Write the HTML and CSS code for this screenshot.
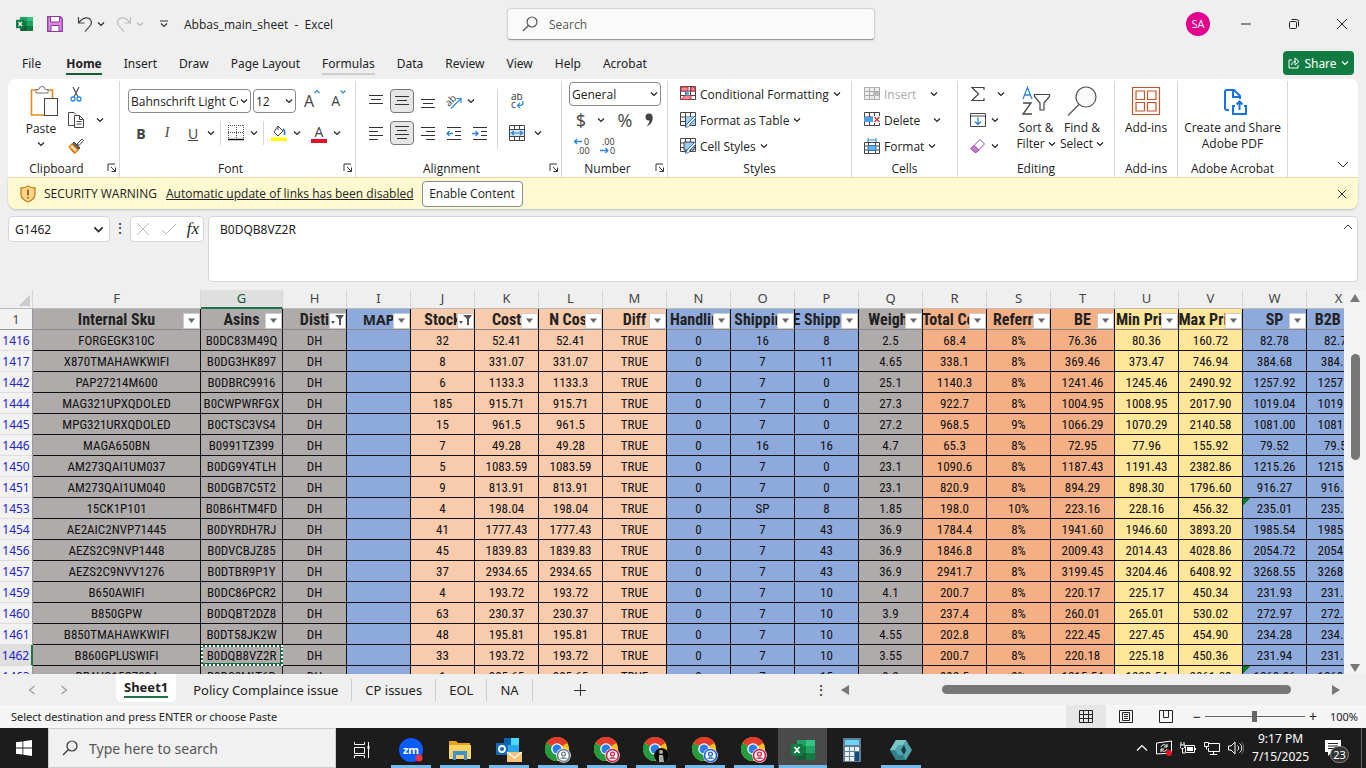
FILE: index.html
```html
<!DOCTYPE html>
<html lang="en">
<head>
    <meta charset="UTF-8">
    <meta name="viewport" content="width=device-width, initial-scale=1.0">
    <title>Abbas_main_sheet - Excel</title>
    <link rel="stylesheet" href="styles.css">
</head>
<body>
    <svg class="symbols">
        <symbol id="chev" viewBox="0 0 8 8"><path d="M1 2.500l3 3 3-3" fill="none" stroke="currentColor" stroke-width="1.200"/></symbol>
        <symbol id="launch" viewBox="0 0 10 10"><path d="M1 8V1h7M4 4l4 4M8.500 4.500v4h-4" fill="none" stroke="#333"/></symbol>
        <symbol id="lens" viewBox="0 0 18 18"><circle cx="11" cy="7" r="5" fill="none" stroke="currentColor" stroke-width="1.200"/><path d="M7.500 10.500L2 16" stroke="currentColor" stroke-width="1.200"/></symbol>
        <symbol id="excel" viewBox="0 0 24 22">
            <path d="M6 1h17a1 1 0 0 1 1 1v18a1 1 0 0 1-1 1H6z" fill="#185c37"/>
            <path d="M6 1h9v6H6z" fill="#21a366"/><path d="M15 1h8a1 1 0 0 1 1 1v5h-9z" fill="#33c481"/>
            <path d="M6 7h9v7H6z" fill="#107c41"/><path d="M15 7h9v7h-9z" fill="#21a366"/><path d="M15 14h9v6a1 1 0 0 1-1 1h-8z" fill="#107c41"/>
            <rect y="5" width="12" height="12" rx="1" fill="#107c41"/>
            <path d="M3.500 8l5 6M8.500 8l-5 6" stroke="#fff" stroke-width="1.700"/>
        </symbol>
        <symbol id="chrome" viewBox="0 0 26 26">
            <circle cx="12" cy="12" r="12" fill="#fbc116"/>
            <path d="M12 12L1.600 6A12 12 0 0 1 22.400 6z" fill="#e33b2e"/>
            <path d="M12 0a12 12 0 0 1 10.400 6H12z" fill="#e33b2e"/>
            <path d="M1.600 6A12 12 0 0 0 12 24l5.200-9L12 12z" fill="#249a41"/>
            <circle cx="12" cy="12" r="5.800" fill="#fff"/><circle cx="12" cy="12" r="4.500" fill="#2b7de9"/>
            <circle cx="18.500" cy="18.500" r="7.300" fill="#fff"/>
            <circle cx="18.500" cy="18.500" r="6" fill="none" stroke="currentColor" stroke-width="1.600"/>
            <circle cx="18.500" cy="17" r="1.900" fill="none" stroke="currentColor" stroke-width="1.300"/>
            <path d="M15 21.800c.5-2 6.500-2 7 0z" fill="currentColor"/>
        </symbol>
        <symbol id="grid16" viewBox="0 0 16 16"><path d="M.5.5h15v13H.5zM.5 5h15M.5 9.500h15M5.500.5v13M10.500.5v13" fill="#fff" stroke="#444"/></symbol>
    </svg>

    <header class="titlebar">
        <div class="quick">
            <svg class="i17"><use href="#excel"/></svg>
            <button aria-label="Save"><svg class="i16" viewBox="0 0 16 16"><path d="M.7.7h12.600l2 2v12.600H.7z" fill="#d98be0" stroke="#8f3a9b" stroke-width="1.300"/><path d="M3.500 1v5h9V1M4 15V9.500h8V15" fill="#fff" stroke="#8f3a9b"/></svg></button>
            <button aria-label="Undo"><svg class="i16" viewBox="0 0 16 16"><path d="M1.500 1v6h6M2 6.500C6 1 12 .5 14 4.500c1.500 3-.5 5-6 11" fill="none" stroke="#444" stroke-width="1.200"/></svg></button>
            <svg class="i8"><use href="#chev"/></svg>
            <button aria-label="Redo" class="dim"><svg class="i16" viewBox="0 0 16 16"><path d="M14.500 1v6h-6M14 6.500C10 1 4 .5 2 4.500c-1.500 3 .5 5 6 11" fill="none" stroke="#bbb" stroke-width="1.200"/></svg></button>
            <svg class="i8 dim"><use href="#chev"/></svg>
            <svg class="i8 custom" viewBox="0 0 8 8"><path d="M0 1h8M1 3.500l3 3 3-3" fill="none" stroke="#333" stroke-width="1.200"/></svg>
            <span>Abbas_main_sheet&nbsp; -&nbsp; Excel</span>
        </div>
        <label class="search"><svg class="i18"><use href="#lens"/></svg><input type="text" placeholder="Search" aria-label="Search"></label>
        <div class="window">
            <span class="avatar">SA</span>
            <button aria-label="Minimize"><svg class="i12" viewBox="0 0 12 12"><path d="M1 6h10" stroke="#222"/></svg></button>
            <button aria-label="Restore"><svg class="i12" viewBox="0 0 12 12"><rect x="1.500" y="3.500" width="7" height="7" rx="1" fill="none" stroke="#222"/><path d="M3.500 1.500h5a2 2 0 0 1 2 2v5" fill="none" stroke="#222"/></svg></button>
            <button aria-label="Close"><svg class="i12" viewBox="0 0 12 12"><path d="M1 1l10 10M11 1L1 11" stroke="#222"/></svg></button>
        </div>
    </header>

    <nav class="tabs">
        <button class="file">File</button>
        <button class="active">Home</button>
        <button>Insert</button>
        <button>Draw</button>
        <button>Page Layout</button>
        <button class="hover">Formulas</button>
        <button>Data</button>
        <button>Review</button>
        <button>View</button>
        <button>Help</button>
        <button>Acrobat</button>
        <button class="share"><svg class="i12" viewBox="0 0 12 12"><path d="M4 3H1v8h9V8M3.500 8C4 5 6 4.500 8 4.500M7 1l4 3.500L7 8V1z" fill="none" stroke="#fff"/></svg>Share<svg class="i8"><use href="#chev"/></svg></button>
    </nav>

    <section class="ribbon">
        <div class="group clipboard">
            <div class="body">
                <button class="big"><svg class="paste-icon" viewBox="0 0 28 31"><path d="M6 4H1.500v25H14M18 4h4.500v8" fill="none" stroke="#e88a1c" stroke-width="1.600"/><path d="M6 7V3.500h3a3 3 0 0 1 6 0h3V7z" fill="#fff" stroke="#777"/><rect x="14.500" y="12.500" width="13" height="17" fill="#fafafa" stroke="#444"/></svg>Paste<svg class="i8"><use href="#chev"/></svg></button>
                <div class="stack">
                    <div><button aria-label="Cut"><svg class="i16" viewBox="0 0 16 16"><path d="M5 1l5 10M11 1L6 11" stroke="#555" stroke-width="1.200"/><circle cx="5" cy="13" r="2" fill="none" stroke="#2b88d8" stroke-width="1.300"/><circle cx="11" cy="13" r="2" fill="none" stroke="#2b88d8" stroke-width="1.300"/></svg></button></div>
                    <div><button aria-label="Copy"><svg class="i16" viewBox="0 0 16 16"><path d="M6 13.500H.5V.5H6l2 2M6.500 3.500h5l4 4v8h-9zM11.500 3.500v4h4M8.500 9.500h5M8.500 12h5" fill="none" stroke="#444"/></svg></button><svg class="i8 push"><use href="#chev"/></svg></div>
                    <div><button aria-label="Format Painter"><svg class="i16" viewBox="0 0 16 16"><path d="M9 6l5-5 1.500 1.500-4.500 5z" fill="#fff" stroke="#444"/><path d="M6 4l6 6-1.500 1.500-6-6z" fill="#666" stroke="#444"/><path d="M4 6l6 6-3 3L1 9z" fill="#ffe0b5" stroke="#e07b10" stroke-width="1.300"/><path d="M3 11l4 4" stroke="#e07b10" stroke-width="2"/></svg></button></div>
                </div>
            </div>
            <footer class="more">Clipboard<svg class="i10"><use href="#launch"/></svg></footer>
        </div>

        <div class="group font">
            <div class="body rows">
                <div>
                    <select class="face" aria-label="Font"><option>Bahnschrift Light Condensed</option></select>
                    <select class="size" aria-label="Font size"><option>12</option></select>
                    <button class="grow">A<svg class="i6" viewBox="0 0 6 6"><path d="M.5 4L3 1.500 5.500 4" fill="none" stroke="#2b88d8" stroke-width="1.200"/></svg></button>
                    <button class="shrink">A<svg class="i6" viewBox="0 0 6 6"><path d="M.5 1.500L3 4l2.500-2.500" fill="none" stroke="#2b88d8" stroke-width="1.200"/></svg></button>
                </div>
                <div class="marks">
                    <button><b>B</b></button>
                    <button><i class="serif">I</i></button>
                    <button><u>U</u></button>
                    <svg class="i8"><use href="#chev"/></svg>
                    <hr>
                    <button aria-label="Borders"><svg class="i16" viewBox="0 0 16 16"><path d="M.5 0v14M15.500 0v14M0 .5h16M8.500 0v14M0 7.500h16" fill="none" stroke="#555" stroke-dasharray="1 1"/><path d="M0 14.500h16" stroke="#111" stroke-width="1.500"/></svg></button>
                    <svg class="i8"><use href="#chev"/></svg>
                    <hr>
                    <button aria-label="Fill Color"><svg class="i16" viewBox="0 0 16 16"><path d="M7 1l5 5-5 5-4-4zM7 1v4" fill="#fff" stroke="#444"/><path d="M12 4c2 1 2 3 1.500 6" fill="none" stroke="#1f6fc0" stroke-width="1.500"/><path d="M0 12.500h16V16H0z" fill="#ffff00"/></svg></button>
                    <svg class="i8"><use href="#chev"/></svg>
                    <button class="fontcolor"><span>A</span></button>
                    <svg class="i8"><use href="#chev"/></svg>
                </div>
            </div>
            <footer class="more">Font<svg class="i10"><use href="#launch"/></svg></footer>
        </div>

        <div class="group align">
            <div class="body">
                <div class="lines">
                    <button aria-label="Top Align"><svg class="i16" viewBox="0 0 16 16"><path d="M1 2.500h14M3 6.500h10M1 10.500h14" stroke="#333"/></svg></button>
                    <button aria-label="Middle Align" class="on"><svg class="i16" viewBox="0 0 16 16"><path d="M1 3.500h14M3 7.500h10M1 11.500h14" stroke="#333"/></svg></button>
                    <button aria-label="Bottom Align"><svg class="i16" viewBox="0 0 16 16"><path d="M1 6.500h14M3 10.500h10M1 14.500h14" stroke="#333"/></svg></button>
                    <button aria-label="Orientation"><svg class="i16" viewBox="0 0 16 16"><text x="0" y="11" font-size="10" fill="#444" transform="rotate(-45 5 9)">ab</text><path d="M5 15.500L15 5.500M10.500 5.500H15V10" fill="none" stroke="#2b88d8" stroke-width="1.200"/></svg></button>
                    <svg class="i8"><use href="#chev"/></svg>
                    <button aria-label="Align Left"><svg class="i16" viewBox="0 0 16 16"><path d="M1 2.500h14M1 6.500h9M1 10.500h14M1 14.500h9" stroke="#333"/></svg></button>
                    <button aria-label="Center" class="on"><svg class="i16" viewBox="0 0 16 16"><path d="M1 1.500h14M3 5.500h10M1 9.500h14M3 13.500h10" stroke="#333"/></svg></button>
                    <button aria-label="Align Right"><svg class="i16" viewBox="0 0 16 16"><path d="M1 2.500h14M6 6.500h9M1 10.500h14M6 14.500h9" stroke="#333"/></svg></button>
                    <button aria-label="Decrease Indent"><svg class="i16" viewBox="0 0 16 16"><path d="M1 2.500h14M9 6.500h6M9 10.500h6M1 14.500h14" stroke="#333"/><path d="M7 8.500H1M3.500 6L1 8.500 3.500 11" fill="none" stroke="#2b88d8" stroke-width="1.300"/></svg></button>
                    <button aria-label="Increase Indent"><svg class="i16" viewBox="0 0 16 16"><path d="M1 2.500h14M9 6.500h6M9 10.500h6M1 14.500h14" stroke="#333"/><path d="M0 8.500h6M3.500 6L6 8.500 3.500 11" fill="none" stroke="#2b88d8" stroke-width="1.300"/></svg></button>
                </div>
                <hr>
                <div class="wrap">
                    <button aria-label="Wrap Text"><svg class="i16" viewBox="0 0 16 16"><text x="2" y="7" font-size="10" fill="#333">ab</text><text x="2" y="15" font-size="10" fill="#333">c</text><path d="M13.500 8c2 4-1 4.500-5 4.500M11 10l-2.500 2.500L11 15" fill="none" stroke="#2b88d8" stroke-width="1.200"/></svg></button>
                    <span></span>
                    <button aria-label="Merge"><svg class="i16" viewBox="0 0 16 16"><path d="M.5.5h15v15H.5zM.5 4.500h15M.5 11.500h15M5.500.5v4M10.500.5v4M5.500 11.500v4M10.500 11.500v4" fill="#fff" stroke="#444"/><path d="M1 5h14v6H1z" fill="#cfe6fa"/><path d="M2.500 8h11M5 6L2.500 8 5 10M11 6l2.500 2L11 10" fill="none" stroke="#2b78c8" stroke-width="1.200"/></svg></button>
                    <svg class="i8"><use href="#chev"/></svg>
                </div>
            </div>
            <footer class="more">Alignment<svg class="i10"><use href="#launch"/></svg></footer>
        </div>

        <div class="group number">
            <div class="body stack">
                <div><select class="format" aria-label="Number Format"><option>General</option></select></div>
                <div class="signs"><button>$</button><svg class="i8"><use href="#chev"/></svg><button>%</button><button aria-label="Comma Style"><svg class="i16" viewBox="0 0 16 16"><circle cx="8" cy="5" r="3.500" fill="#444"/><path d="M11.500 5c.5 5-2 8-6 9.500 2-2.500 3-4 3-7z" fill="#444"/></svg></button></div>
                <div class="decimals">
                    <button aria-label="Increase Decimal"><svg class="i18" viewBox="0 0 18 18"><text x="11" y="8" font-size="9" fill="#333">0</text><text x="4" y="17" font-size="9" fill="#333">.00</text><path d="M9 4.500H1.500M4 2L1.500 4.500 4 7" fill="none" stroke="#2b88d8" stroke-width="1.300"/></svg></button>
                    <button aria-label="Decrease Decimal"><svg class="i18" viewBox="0 0 18 18"><text x="3" y="8" font-size="9" fill="#333">.00</text><text x="11" y="17" font-size="9" fill="#333">0</text><path d="M1 13.500h8M6.500 11L9 13.500 6.500 16" fill="none" stroke="#2b88d8" stroke-width="1.300"/></svg></button>
                </div>
            </div>
            <footer class="more">Number<svg class="i10"><use href="#launch"/></svg></footer>
        </div>

        <div class="group styles">
            <div class="body stack">
                <button><svg class="i16" viewBox="0 0 16 16"><use href="#grid16"/><path d="M1 1h7v4H1zM5 9.500h6v4H1zM11 1h4v4h-4z" fill="#f28a90" stroke="#c4313c"/><path d="M5.500 5.500H9v4H5.500z" fill="#5aa7e8"/></svg>Conditional Formatting<svg class="i8"><use href="#chev"/></svg></button>
                <button><svg class="i16" viewBox="0 0 16 16"><use href="#grid16"/><path d="M6 5h9v8H6z" fill="#9ccbf2"/><path d="M15 4l-7 7-3 4c3 .5 5-1 5-3l6-6z" fill="#fff" stroke="#2b6fb0"/></svg>Format as Table<svg class="i8"><use href="#chev"/></svg></button>
                <button><svg class="i16" viewBox="0 0 16 16"><use href="#grid16"/><path d="M4 4h10v8H4z" fill="#9ccbf2" stroke="#444"/><path d="M15 4l-7 7-3 4c3 .5 5-1 5-3l6-6z" fill="#fff" stroke="#2b6fb0"/></svg>Cell Styles<svg class="i8"><use href="#chev"/></svg></button>
            </div>
            <footer>Styles</footer>
        </div>

        <div class="group cells">
            <div class="body stack">
                <div class="insert"><button disabled><svg class="i16" viewBox="0 0 16 16"><path d="M.5 1.500h15v12H.5zM.5 5.500h15M.5 9.500h15M5.500 1.500v12M10.500 1.500v12" fill="#eee" stroke="#aaa"/><path d="M9 6h6v4H9z" fill="#bbb"/></svg>Insert</button><svg class="i8"><use href="#chev"/></svg></div>
                <div><button><svg class="i16" viewBox="0 0 16 16"><use href="#grid16"/><path d="M0 5h9v5H0z" fill="#4f9fe6"/><path d="M9 4h7v7H9z" fill="#fff"/><path d="M10.500 5l5 5M15.500 5l-5 5" stroke="#d13438" stroke-width="1.300"/></svg>Delete</button><svg class="i8"><use href="#chev"/></svg></div>
                <div class="format-row"><button><svg class="i16" viewBox="0 0 16 16"><path d="M.5 4.500h15v11H.5zM.5 8h15M.5 12h15M4.500 4.500v11M11.500 4.500v11" fill="#fff" stroke="#444"/><path d="M4 7.500h8v5H4z" fill="#6cb2ee" stroke="#2b6fb0"/><path d="M4 2h8M4 0v4M12 0v4" stroke="#2b88d8"/></svg>Format<svg class="i8"><use href="#chev"/></svg></button></div>
            </div>
            <footer>Cells</footer>
        </div>

        <div class="group editing">
            <div class="body">
                <div class="stack">
                    <div class="sum"><button aria-label="AutoSum"><svg class="i16" viewBox="0 0 16 16"><path d="M14 4V1.500H2L8.500 8 2 14.500h12V12" fill="none" stroke="#444" stroke-width="1.200"/></svg></button><svg class="i8"><use href="#chev"/></svg></div>
                    <div><button aria-label="Fill"><svg class="i16" viewBox="0 0 16 16"><path d="M.5 1.500h15v13H.5zM.5 4h15" fill="#fff" stroke="#444"/><path d="M8 5.500v7M5 9.500l3 3 3-3" fill="none" stroke="#2b88d8" stroke-width="1.300"/></svg></button><svg class="i8"><use href="#chev"/></svg></div>
                    <div><button aria-label="Clear"><svg class="i16" viewBox="0 0 16 16"><path d="M10 1.500l4.500 4.500-8.500 8.500H5L1 10.500z" fill="#fff" stroke="#9a45a8"/><path d="M4 7.500l5 4.500-3 2.500H5L1 10.500z" fill="#c47fd0" stroke="#9a45a8"/></svg></button><svg class="i8"><use href="#chev"/></svg></div>
                </div>
                <button class="big"><svg class="sort-icon" viewBox="0 0 30 30"><path d="M2 13L6.500 1.500 11 13M3.500 9h6" fill="none" stroke="#2b88d8" stroke-width="1.300"/><path d="M2 17h8L2 28h9" fill="none" stroke="#444" stroke-width="1.300"/><path d="M13.500 8.500h15v2L23 17v7h-4v-7l-5.500-6.500z" fill="#fff" stroke="#444" stroke-width="1.200"/></svg>Sort &amp;<span>Filter <svg class="i8"><use href="#chev"/></svg></span></button>
                <button class="big"><svg class="sort-icon" viewBox="0 0 30 30"><circle cx="19" cy="11" r="10" fill="#fafafa" stroke="#555" stroke-width="1.200"/><path d="M12 18.500L1 29.500" stroke="#555" stroke-width="1.200"/></svg>Find &amp;<span>Select <svg class="i8"><use href="#chev"/></svg></span></button>
            </div>
            <footer>Editing</footer>
        </div>

        <div class="group addins">
            <div class="body">
                <button class="big"><svg class="sort-icon" viewBox="0 0 30 30"><path d="M1.500 1.500h27v27h-27zM5 5h8.500v8.500H5zM16.500 5H25v8.500h-8.500zM5 16.500h8.500V25H5zM16.500 16.500H25V25h-8.500z" fill="none" stroke="#c5532b" stroke-width="1.200"/></svg>Add-ins</button>
            </div>
            <footer>Add-ins</footer>
        </div>

        <div class="group acrobat">
            <div class="body">
                <button class="big"><svg class="sort-icon" viewBox="0 0 30 30"><path d="M11 24H9a2 2 0 0 1-2-2V6a2 2 0 0 1 2-2h7l6 6v3M15 4v7h7" fill="none" stroke="#1473e6" stroke-width="2"/><path d="M17 20h-2v8h13v-8h-2M21.500 24v-8M18.500 18.500l3-3 3 3" fill="none" stroke="#1473e6" stroke-width="2"/></svg>Create and Share<span>Adobe PDF</span></button>
            </div>
            <footer>Adobe Acrobat</footer>
        </div>
        <button class="collapse" aria-label="Collapse"><svg class="i12" viewBox="0 0 12 12"><path d="M1 4l5 5 5-5" fill="none" stroke="#333"/></svg></button>
    </section>

    <section class="warning">
        <svg class="i18" viewBox="0 0 18 18"><path d="M9 1c2 1.500 4 2 7 2v6c0 4-3 6.500-7 8-4-1.500-7-4-7-8V3c3 0 5-.5 7-2z" fill="#fbd58a" stroke="#c98216" stroke-width="1.300"/><path d="M9 4.500v6M9 12v1.500" stroke="#7a4a00" stroke-width="1.500"/></svg>
        <span>SECURITY WARNING</span>
        <a href="#">Automatic update of links has been disabled</a>
        <button class="enable">Enable Content</button>
        <button class="dismiss" aria-label="Close"><svg class="i10" viewBox="0 0 10 10"><path d="M1 1l8 8M9 1L1 9" stroke="#333"/></svg></button>
    </section>

    <section class="formula">
        <select class="namebox" aria-label="Name Box"><option>G1462</option></select>
        <span class="dots">⋮</span>
        <div class="fx">
            <svg class="i16" viewBox="0 0 16 16"><path d="M2 2l12 12M14 2L2 14" stroke="#bbb"/></svg>
            <svg class="i16" viewBox="0 0 16 16"><path d="M1 9l4 4L15 3" fill="none" stroke="#bbb"/></svg>
            <i>fx</i>
        </div>
        <div class="entry">
            <textarea aria-label="Formula Bar">B0DQB8VZ2R</textarea>
            <svg class="i10" viewBox="0 0 10 10"><path d="M1 7l4-4 4 4" fill="none" stroke="#333"/></svg>
        </div>
    </section>

    <main class="sheet">
        <div class="cells-view">
            <table>
                <colgroup><col class="c-row"><col class="c-sku"><col class="c-asin"><col span="17"></colgroup>
                <thead><tr class="letters" id="letters"></tr><tr class="heads" id="heads"></tr></thead>
                <tbody id="rows"></tbody>
            </table>
        </div>
        <div class="vscroll"><i class="up"></i><i class="thumb"></i><i class="down"></i></div>
    </main>

    <nav class="sheets">
        <button class="arrow" aria-label="Previous"><svg class="i10" viewBox="0 0 10 10"><path d="M7.500 1l-5 4 5 4" fill="none" stroke="#999" stroke-width="1.200"/></svg></button>
        <button class="arrow" aria-label="Next"><svg class="i10" viewBox="0 0 10 10"><path d="M2.500 1l5 4-5 4" fill="none" stroke="#999" stroke-width="1.200"/></svg></button>
        <button class="current"><span>Sheet1</span></button>
        <button>Policy Complaince issue</button>
        <button>CP issues</button>
        <button>EOL</button>
        <button>NA</button>
        <button class="add" aria-label="New sheet"><svg class="i12" viewBox="0 0 12 12"><path d="M6.500 0v12M0 6.500h12" stroke="#333"/></svg></button>
        <span class="dots">⋮</span>
        <div class="hscroll"><i class="left"></i><i class="thumb"></i><i class="right"></i></div>
    </nav>

    <footer class="status">
        <span>Select destination and press ENTER or choose Paste</span>
        <button class="view on" aria-label="Normal"><svg class="i14" viewBox="0 0 14 14"><path d="M.5.5h13v12H.5zM.5 4.500h13M.5 8.500h13M4.500.5v12M9.500.5v12" fill="none" stroke="#222"/></svg></button>
        <button class="view" aria-label="Page Layout"><svg class="i14" viewBox="0 0 14 14"><path d="M.5.5h13v12H.5zM3.500 2.500h7v8h-7zM5 4.500h4M5 6.500h4M5 8.500h4" fill="none" stroke="#222"/></svg></button>
        <button class="view" aria-label="Page Break"><svg class="i14" viewBox="0 0 14 14"><path d="M.5.5h13v12H.5zM4.500.5v7h5v-7M9.500 7.500" fill="none" stroke="#222"/></svg></button>
        <span class="zoom">−<input type="range" min="10" max="190" value="100" aria-label="Zoom">+</span>
        <span class="percent">100%</span>
    </footer>

    <footer class="taskbar">
        <button class="start" aria-label="Start"><svg class="i16" viewBox="0 0 16 16"><path d="M0 2.300L6.500 1.400v6.200H0zM7.300 1.300L16 0v7.600H7.300zM0 8.400h6.500v6.200L0 13.700zM7.300 8.400H16V16l-8.700-1.300z" fill="#fff"/></svg></button>
        <label class="find"><svg class="i18"><use href="#lens"/></svg><input type="text" placeholder="Type here to search" aria-label="Type here to search"></label>
        <button class="app" aria-label="Task View"><svg class="i16" viewBox="0 0 16 16"><path d="M.5 0v2.500h10V0M.5 5.500h10v6H.5zM.5 16v-2.500h10V16M14.500 0v16" fill="none" stroke="#fff"/><path d="M13.500 4h2v3h-2z" fill="#fff"/></svg></button>
        <button class="app open" aria-label="Zoom"><svg class="i24" viewBox="0 0 24 24"><circle cx="12" cy="12" r="12" fill="#0b5cff"/><text x="12" y="16" font-size="11" font-weight="bold" text-anchor="middle" fill="#fff">zm</text><circle cx="20" cy="20" r="3.500" fill="#f0323c"/></svg></button>
        <button class="app open" aria-label="File Explorer"><svg class="i24" viewBox="0 0 24 24"><path d="M1 3h7l2 2h12v4H1z" fill="#e8a317"/><path d="M1 7h22v14H1z" fill="#fcd462"/><path d="M5 13h14v9h-3v-5H8v5H5z" fill="#3f8fd4"/></svg></button>
        <button class="app open" aria-label="Outlook"><svg class="i26" viewBox="0 0 26 26"><path d="M8 1h15v16H8z" fill="#28a8ea"/><path d="M8 1h7v7H8z" fill="#0364b8"/><path d="M15 1h8v7h-8z" fill="#50d9ff"/><rect y="6" width="12" height="12" rx="1" fill="#0f6cbd"/><circle cx="6" cy="12" r="3" fill="none" stroke="#fff" stroke-width="1.800"/><path d="M11 15h15v10H11z" fill="#f6c27a"/><path d="M11 15l7.500 6 7.500-6" fill="none" stroke="#fff" stroke-width="1.300"/></svg></button>
        <button class="app open grey" aria-label="Chrome"><svg class="i26"><use href="#chrome"/></svg></button>
        <button class="app open red" aria-label="Chrome"><svg class="i26"><use href="#chrome"/></svg></button>
        <button class="app open dark" aria-label="Chrome"><svg class="i26" viewBox="0 0 26 26"><use href="#chrome"/><circle cx="18.500" cy="18.500" r="7.500" fill="#0a0a0a"/><circle cx="18" cy="15" r="2" fill="#c9a78e"/><path d="M16 18h4l1 7h-5z" fill="#aaa"/></svg></button>
        <button class="app open blue" aria-label="Chrome"><svg class="i26"><use href="#chrome"/></svg></button>
        <button class="app open red" aria-label="Chrome"><svg class="i26"><use href="#chrome"/></svg></button>
        <button class="app open focus" aria-label="Excel"><svg class="i24"><use href="#excel"/></svg></button>
        <button class="app" aria-label="Calculator"><svg class="i24" viewBox="0 0 24 24"><path d="M3 0h18v24H3z" fill="#5f7f95"/><path d="M5 2h14v5H5z" fill="#6fd3f5"/><path d="M5 9h4v4H5zM10 9h4v4h-4zM15 9h4v4h-4zM5 14h4v4H5zM10 14h4v4h-4zM5 19h4v4H5zM10 19h4v4h-4z" fill="#e8eef2"/><path d="M15 14h4v9h-4z" fill="#124a80"/></svg></button>
        <button class="app open" aria-label="Hexagon"><svg class="i24" viewBox="0 0 24 24"><path d="M7 2h10l6 10-6 10H7L1 12z" fill="#4fa3a8"/><path d="M7 2h10l-3 5H9l-3 5H1z" fill="#7cc8c8"/><path d="M1 12h5l3 5h5l3 5H7z" fill="#2f7f88"/><path d="M12 12l3-5 2 5-2 5z" fill="#123c44"/></svg></button>
        <div class="tray">
            <svg class="i12" viewBox="0 0 12 12"><path d="M1 8.500l5-5 5 5" fill="none" stroke="#fff" stroke-width="1.200"/></svg>
            <svg class="i16" viewBox="0 0 16 16"><path d="M.5 3L15.500 1v12L.5 14z" fill="none" stroke="#fff"/><path d="M5 7c1-3 5-3 6 0M11 4v3H8M11 9c-1 3-5 3-6 0M5 12V9h3" fill="none" stroke="#fff"/><circle cx="13" cy="13" r="3" fill="#e81123"/></svg>
            <svg class="i16" viewBox="0 0 16 16"><path d="M5.500 5.500h9v7h-9z" fill="none" stroke="#fff"/><path d="M7 7h6v4H7zM15 8h1v2h-1z" fill="#fff"/><path d="M1 2v3M4 2v3M0 5h5v2L3.500 8.500h-2L0 7zM2.500 8v5H5" fill="none" stroke="#fff"/></svg>
            <svg class="i16" viewBox="0 0 16 16"><path d="M5 3.500h10.500v8H4.500V8M9.500 11.500v3M6 14.500h7M.5 2.500h4v4h-4zM2.500 6.500v3" fill="none" stroke="#fff"/></svg>
            <svg class="i16" viewBox="0 0 16 16"><path d="M.5 6H3l4-4v12l-4-4H.5zM9.500 5.500c1.500 1 1.500 4 0 5M11.500 3.500c3 2 3 7 0 9" fill="none" stroke="#fff"/><path d="M13.500 2c3 3 3 9 0 12" fill="none" stroke="#777"/></svg>
            <div class="clock"><span>9:17 PM</span><span>7/15/2025</span></div>
            <div class="notes"><svg class="i16" viewBox="0 0 16 16"><path d="M0 0h16v12H7l-4 4v-4H0z" fill="#fff"/><path d="M3 3.500h10M3 6h10M3 8.500h7" stroke="#222"/></svg><span>23</span></div>
        </div>
    </footer>

    <script>
        // sku, asin, stock, cost, shipping, e shipping, weight, total cost, referral, BE, min, max, SP, B2B
        const data = {
            1416: ['FORGEGK310C', 'B0DC83M49Q', '32', '52.41', '16', '8', '2.5', '68.4', '8%', '76.36', '80.36', '160.72', '82.78', '82.78'],
            1417: ['X870TMAHAWKWIFI', 'B0DG3HK897', '8', '331.07', '7', '11', '4.65', '338.1', '8%', '369.46', '373.47', '746.94', '384.68', '384.68'],
            1442: ['PAP27214M600', 'B0DBRC9916', '6', '1133.3', '7', '0', '25.1', '1140.3', '8%', '1241.46', '1245.46', '2490.92', '1257.92', '1257.92'],
            1444: ['MAG321UPXQDOLED', 'B0CWPWRFGX', '185', '915.71', '7', '0', '27.3', '922.7', '8%', '1004.95', '1008.95', '2017.90', '1019.04', '1019.04'],
            1445: ['MPG321URXQDOLED', 'B0CTSC3VS4', '15', '961.5', '7', '0', '27.2', '968.5', '9%', '1066.29', '1070.29', '2140.58', '1081.00', '1081.00'],
            1446: ['MAGA650BN', 'B0991TZ399', '7', '49.28', '16', '16', '4.7', '65.3', '8%', '72.95', '77.96', '155.92', '79.52', '79.52'],
            1450: ['AM273QAI1UM037', 'B0DG9Y4TLH', '5', '1083.59', '7', '0', '23.1', '1090.6', '8%', '1187.43', '1191.43', '2382.86', '1215.26', '1215.26'],
            1451: ['AM273QAI1UM040', 'B0DGB7C5T2', '9', '813.91', '7', '0', '23.1', '820.9', '8%', '894.29', '898.30', '1796.60', '916.27', '916.27'],
            1453: ['15CK1P101', 'B0B6HTM4FD', '4', '198.04', 'SP', '8', '1.85', '198.0', '10%', '223.16', '228.16', '456.32', '235.01', '235.01'],
            1454: ['AE2AIC2NVP71445', 'B0DYRDH7RJ', '41', '1777.43', '7', '43', '36.9', '1784.4', '8%', '1941.60', '1946.60', '3893.20', '1985.54', '1985.54'],
            1456: ['AEZS2C9NVP1448', 'B0DVCBJZ85', '45', '1839.83', '7', '43', '36.9', '1846.8', '8%', '2009.43', '2014.43', '4028.86', '2054.72', '2054.72'],
            1457: ['AEZS2C9NVV1276', 'B0DTBR9P1Y', '37', '2934.65', '7', '43', '36.9', '2941.7', '8%', '3199.45', '3204.46', '6408.92', '3268.55', '3268.55'],
            1459: ['B650AWIFI', 'B0DC86PCR2', '4', '193.72', '7', '10', '4.1', '200.7', '8%', '220.17', '225.17', '450.34', '231.93', '231.93'],
            1460: ['B850GPW', 'B0DQBT2DZ8', '63', '230.37', '7', '10', '3.9', '237.4', '8%', '260.01', '265.01', '530.02', '272.97', '272.97'],
            1461: ['B850TMAHAWKWIFI', 'B0DT58JK2W', '48', '195.81', '7', '10', '4.55', '202.8', '8%', '222.45', '227.45', '454.90', '234.28', '234.28'],
            1462: ['B860GPLUSWIFI', 'B0DQB8VZ2R', '33', '193.72', '7', '10', '3.55', '200.7', '8%', '220.18', '225.18', '450.36', '231.94', '231.94'],
            1463: ['BRAVO15C7094', 'B0DS2MLT6D', '1', '985.65', '7', '15', '9.2', '992.5', '9%', '1215.54', '1220.54', '2261.08', '1268.86', '1268.86']
        };
        const letters = 'FGHIJKLMNOPQRSTUVWX'.split('');
        const heads = ['Internal Sku', 'Asins', 'Disti', 'MAP', 'Stock', 'Cost', 'N Cost', 'Diff', 'Handling', 'Shipping', 'E Shipping', 'Weight', 'Total Cost', 'Referral', 'BE', 'Min Price', 'Max Price', 'SP', 'B2B SP'];
        const colors = ['grey', 'grey', 'grey', 'blue', 'peach', 'peach', 'peach', 'peach', 'blue', 'blue', 'blue', 'grey', 'orange', 'orange', 'orange', 'yellow', 'yellow', 'blue', 'blue'];
        const funnel = '<svg class="i13" viewBox="0 0 13 13"><path d="M4 1h9l-3 4v6H8V5z" fill="#555"/><path d="M0 7h4L2 10z" fill="#555"/></svg>';
        const arrow = '<svg class="i13" viewBox="0 0 13 13"><path d="M3 4.500h7L6.500 9z" fill="#666"/></svg>';

        document.getElementById('letters').innerHTML = '<th class="corner"></th>' +
            letters.map(l => `<th class="${l === 'G' ? 'picked' : ''}">${l}</th>`).join('');

        document.getElementById('heads').innerHTML = '<th class="no">1</th>' + heads.map((h, i) => {
            const filtered = h === 'Disti' || h === 'Stock';
            return `<th class="${colors[i]} ${h === 'MAP' ? 'map' : ''}"><div>${h}<button aria-label="Filter ${h}">${filtered ? funnel : arrow}</button></div></th>`;
        }).join('');

        document.getElementById('rows').innerHTML = Object.keys(data).map(no => {
            const d = data[no];
            const row = [d[0], d[1], 'DH', '', d[2], d[3], d[3], 'TRUE', '0', ...d.slice(4)];
            return `<tr class="${no === '1462' ? 'picked' : ''}"><th class="no">${no}</th>` + row.map((v, i) => {
                let cls = colors[i];
                if (no === '1462' && i === 1) cls += ' copied';
                if (i === 17 && (no === '1453' || no === '1463')) cls += ' flag';
                return `<td class="${cls}">${v}</td>`;
            }).join('') + '</tr>';
        }).join('');
    </script>
</body>
</html>
```
FILE: styles.css
```css
* {
    box-sizing: border-box;
}
body {
    font-family: "Noto Sans", "Open Sans", sans-serif;
    font-size: 12px;
    color: #222;
    display: flex;
    flex-direction: column;
    height: 100vh;
    margin: 0;
    overflow: hidden;
    background-color: #efefef;
}
button, input, select, textarea {
    font: inherit;
    color: inherit;
    border: none;
    background: none;
    padding: 0;
    margin: 0;
    outline: none;
}
button {
    display: flex;
    align-items: center;
    justify-content: center;
    white-space: nowrap;
}
svg {
    flex: none;
    display: block;
}
.symbols { display: none; }
.i6 { width: 6px; height: 6px; }
.i8 { width: 8px; height: 8px; }
.i10 { width: 10px; height: 10px; }
.i12 { width: 12px; height: 12px; }
.i13 { width: 13px; height: 13px; }
.i14 { width: 14px; height: 14px; }
.i16 { width: 16px; height: 16px; }
.i17 { width: 17px; height: 16px; }
.i18 { width: 18px; height: 18px; }
.i24 { width: 24px; height: 24px; }
.i26 { width: 26px; height: 26px; }
.dim { color: #bbb; }
.titlebar, .ribbon, .warning {
    font-family: "Open Sans", "Noto Sans", sans-serif;
}

/* title bar */
.titlebar {
    display: flex;
    height: 48px;
    align-items: center;
}
.quick {
    flex: 0 0 507px;
    display: flex;
    align-items: center;
    padding-left: 16px;
}
.quick button {
    margin-left: 14px;
}
.quick .i8 { margin-left: 4px; }
.quick .custom {
    margin: 0 16px 0 16px;
}
.quick .dim { margin-left: 11px; }
.quick .i8.dim { margin-left: 4px; }
.search {
    width: 368px;
    height: 32px;
    display: flex;
    align-items: center;
    gap: 10px;
    padding-left: 13px;
    color: #555;
    background-color: #fafafa;
    border: 1px solid #d2d2d2;
    border-bottom-color: #999;
    border-radius: 4px;
    box-shadow: 0 1px 2px rgba(0, 0, 0, 0.1);
}
.search input, .find input {
    flex: 1;
    min-width: 0;
}
::placeholder {
    color: #555;
    opacity: 1;
}
.window {
    margin-left: auto;
    display: flex;
    align-items: center;
}
.window button {
    width: 48px;
    height: 32px;
}
.avatar {
    width: 24px;
    height: 24px;
    line-height: 24px;
    margin-right: 12px;
    border-radius: 50%;
    text-align: center;
    font-size: 11px;
    color: white;
    background-color: #e3008c;
}

/* ribbon tabs */
.tabs {
    display: flex;
    height: 31px;
    padding: 6px 12px 4px 11px;
}
.tabs button {
    margin: 0 11px;
    border-bottom: 2px solid transparent;
}
.tabs .file { margin-right: 14px; }
.tabs .active {
    font-weight: bold;
    border-color: #185c37;
}
.tabs .hover { border-color: #ccc; }
.tabs .share {
    margin: -3px 0 0 auto;
    width: 71px;
    height: 24px;
    gap: 4px;
    color: white;
    background-color: #107c41;
    border: none;
    border-radius: 4px;
}

/* ribbon */
.ribbon {
    display: flex;
    margin: 0 8px;
    height: 98px;
    padding: 2px 0 0;
    background-color: white;
    border-radius: 8px 8px 0 0;
}
.group {
    display: flex;
    flex-direction: column;
    border-right: 1px solid #d8d8d8;
}
.group footer {
    height: 18px;
    display: flex;
    align-items: center;
    justify-content: center;
    position: relative;
}
.group .more { padding-right: 14px; }
.group footer svg {
    position: absolute;
    right: 2px;
}
.body {
    display: flex;
    flex: none;
    height: 78px;
}
.group hr {
    width: 1px;
    height: 24px;
    border: none;
    margin: 0;
    background-color: #d8d8d8;
}
.stack {
    display: flex;
    flex-direction: column;
}
.stack > * {
    display: flex;
    align-items: center;
    justify-content: flex-start;
    height: 26px;
}
.big {
    flex-direction: column;
    justify-content: flex-start;
    line-height: 16px;
}
.big span {
    display: flex;
    align-items: center;
    gap: 3px;
}
.sort-icon {
    width: 30px;
    height: 30px;
    margin: 5px 0 4px;
}
.clipboard { width: 112px; }
.clipboard .big { width: 66px; }
.paste-icon {
    width: 28px;
    height: 31px;
    margin: 5px 0 4px 5px;
}
.clipboard .i8 { margin-top: 3px; }
.clipboard .push { margin: 0 0 0 6px; }
.clipboard .stack { margin-left: -12px; }
.clipboard .stack button { width: 28px; }

.font { width: 236px; }
.rows {
    flex-direction: column;
    padding: 4px 0 0 8px;
}
.rows > div {
    height: 32px;
    display: flex;
    align-items: center;
}
select {
    appearance: none;
    height: 24px;
    border: 1px solid #888;
    border-radius: 4px;
    background: white url("data:image/svg+xml,%3Csvg xmlns='http://www.w3.org/2000/svg' viewBox='0 0 8 8'%3E%3Cpath d='M1 2.500l3 3 3-3' fill='none' stroke='%23222' stroke-width='1.200'/%3E%3C/svg%3E") no-repeat right 2px center / 8px 8px;
    padding: 0 12px 0 2px;
}
.face { width: 123px; }
.size {
    width: 43px;
    margin-left: 2px;
}
.grow, .shrink {
    align-items: flex-start;
    margin-left: 8px;
    font-size: 16px;
    line-height: 24px;
    color: #444;
}
.shrink {
    font-size: 14px;
    margin-left: 11px;
}
.marks button {
    width: 26px;
    height: 24px;
    font-size: 14px;
    color: #444;
}
.marks .i8 { margin: 0 5px 0 1px; }
.marks hr { margin-right: 2px; }
.serif { font-family: "Liberation Serif", serif; }
.fontcolor span {
    border-bottom: 4px solid #e81123;
    width: 16px;
    line-height: 15px;
}

.align { width: 206px; }
.lines {
    display: grid;
    grid-template-columns: repeat(5, 26px);
    grid-template-rows: 32px 32px;
    align-items: center;
    justify-items: center;
    padding: 4px 0 0 7px;
    height: 68px;
}
.lines button {
    width: 24px;
    height: 24px;
}
.lines .i8 { justify-self: start; }
.on {
    background-color: #e6e6e6;
}
.lines .on {
    border: 1px solid #777;
    border-radius: 4px;
}
.align .body hr {
    height: 60px;
    margin: 8px 0 0 4px;
}
.wrap {
    display: grid;
    grid-template-columns: 34px 16px;
    grid-template-rows: 32px 32px;
    align-items: center;
    padding: 4px 0 0 2px;
    height: 68px;
}

.number { width: 106px; }
.number .body { padding-left: 7px; }
.format { width: 92px; }
.signs button {
    font-size: 18px;
    color: #444;
    width: 24px;
}
.signs .i8 { margin: 0 8px 0 4px; }
.decimals button { width: 26px; }

.styles { width: 184px; }
.styles .body, .cells .body { padding-left: 12px; }
.styles button, .cells button { gap: 4px; }
.cells { width: 106px; }
.cells .stack .i8 { margin-left: auto; }
.cells .stack > div { width: 77px; }
.cells .insert { padding-right: 3px; }
.cells .stack button .i8 { margin: 0; }
button:disabled { color: #aaa; }

.editing { width: 157px; }
.editing .stack {
    width: 48px;
    padding-left: 12px;
    margin-right: 7px;
}
.editing .stack .i8 { margin-left: 5px; }
.editing .sum .i8 { margin-left: 11px; }
.editing .big { width: 46px; }
.addins { width: 63px; }
.addins .body, .acrobat .body { justify-content: center; }
.acrobat { width: 110px; }
.collapse {
    margin: auto 9px 7px auto;
}

/* security warning */
.warning {
    display: flex;
    align-items: center;
    margin: 0 8px;
    height: 32px;
    padding: 0 11px;
    background-color: #fdf9d0;
    border-top: 1px solid #ecd8a5;
    border-radius: 0 0 8px 8px;
    box-shadow: 0 1px 2px rgba(0, 0, 0, 0.2);
}
.warning span { margin: 0 9px 0 7px; }
.warning a { color: inherit; }
.enable {
    margin-left: 8px;
    height: 26px;
    width: 101px;
    background-color: white;
    border: 1px solid #888;
    border-radius: 4px;
}
.dismiss { margin-left: auto; }

/* formula bar */
.formula {
    display: flex;
    align-items: flex-start;
    padding: 7px 8px 0;
    height: 81px;
}
.namebox, .fx, .entry {
    background-color: white;
    border: 1px solid #d5d5d5;
    border-radius: 4px;
}
.namebox {
    width: 102px;
    height: 26px;
    padding-left: 6px;
    background-position: right 5px center;
    background-size: 11px 11px;
}
.dots {
    width: 20px;
    text-align: center;
    line-height: 24px;
    font-size: 14px;
}
.fx {
    width: 74px;
    height: 26px;
    display: flex;
    align-items: center;
    justify-content: space-between;
    padding: 0 4px;
}
.fx i {
    font-family: "Liberation Serif", serif;
    font-size: 17px;
}
.entry {
    flex: 1;
    height: 66px;
    margin-left: 4px;
    padding: 5px 4px 0 11px;
    display: flex;
}
.entry textarea {
    flex: 1;
    resize: none;
    line-height: 16px;
}

/* sheet */
.sheet {
    flex: 1;
    min-height: 0;
    display: flex;
}
.cells-view {
    flex: 1;
    min-width: 0;
    overflow: hidden;
}
table {
    table-layout: fixed;
    width: 1371px;
    border-spacing: 0;
    font-family: "Bahnschrift Light Condensed", "Roboto Condensed", "Liberation Sans Narrow", sans-serif;
    font-size: 13px;
}
.c-row { width: 33px; }
.c-sku { width: 168px; }
.c-asin { width: 82px; }
td, th {
    padding: 2px 0 0;
    height: 21px;
    line-height: 18px;
    text-align: center;
    white-space: nowrap;
    overflow: hidden;
    border-right: 1px solid #111;
    border-bottom: 1px solid #111;
}
td { color: #111; }
.letters th {
    height: 19px;
    padding: 0 0 2px;
    font: 13px "Noto Sans", sans-serif;
    line-height: 14px;
    color: #444;
    border-right-color: #d6d6d6;
    border-bottom: 1px solid #bbb;
}
.letters .picked {
    background-color: #dfdfdf;
    color: #185c37;
    padding-bottom: 1px;
    border-bottom: 2px solid #217346;
}
.letters .corner {
    background: linear-gradient(135deg, transparent 50%, #ccc 50%) no-repeat 18px 5px / 12px 11px;
}
.no, .heads .no {
    font: 12px "Noto Sans", sans-serif;
    line-height: 18px;
    color: #2222cc;
    background-color: #f2f2f2;
    border-right-color: #999;
    border-bottom-color: #ddd;
}
.heads .no {
    color: #444;
    border-bottom-color: #999;
}
.heads th {
    padding-top: 1px;
    border-bottom-color: #888;
}
.heads div {
    display: flex;
    justify-content: center;
    position: relative;
    font-size: 16px;
    font-weight: bold;
}
.heads .map div {
    font: bold 14px "Noto Sans", sans-serif;
    line-height: 18px;
}
.heads button {
    position: absolute;
    right: 0;
    top: 2px;
    width: 17px;
    height: 16px;
    background-color: white;
    border: 1px solid #ccc;
    outline: 1px solid transparent;
}
.heads div {
    overflow: hidden;
    height: 18px;
}
.picked .no {
    background-color: #dfdfdf;
    border-right: 2px solid #217346;
}
.grey { background-color: #afabab; }
.blue { background-color: #8ea9db; }
.peach { background-color: #f8cbad; }
.orange { background-color: #f4b084; }
.yellow { background-color: #ffe699; }
.copied {
    outline: 2px dotted white;
    outline-offset: -2px;
    box-shadow: inset 0 0 0 2px #1e6b41;
    border-color: #1e6b41;
}
.flag {
    background-image: linear-gradient(135deg, #0b7a2b 5px, transparent 5px);
}
.vscroll {
    width: 22px;
    display: flex;
    flex-direction: column;
    align-items: center;
    background-color: #f3f3f3;
    padding: 4px 0 2px;
}
.up, .down {
    border: 5px solid transparent;
    border-top: none;
    border-bottom: 8px solid #777;
}
.down {
    margin-top: auto;
    border-top: 8px solid #777;
    border-bottom: none;
}
.thumb {
    background-color: #777;
    border-radius: 5px;
}
.vscroll .thumb {
    width: 9px;
    height: 106px;
    margin-top: 52px;
}

/* sheet tabs */
.sheets {
    display: flex;
    align-items: center;
    height: 31px;
    padding-left: 16px;
    font-size: 13px;
}
.sheets > button {
    height: 22px;
    padding: 0 13px;
    border-right: 1px solid #ccc;
}
.sheets .arrow {
    width: 32px;
    border: none;
}
.sheets .current {
    margin-left: 36px;
    align-self: flex-start;
    height: 28px;
    padding: 0 8px;
    background-color: white;
    border: none;
    border-radius: 0 0 5px 5px;
    font-weight: bold;
}
.current span { border-bottom: 2px solid #217346; }
.current + button { margin-left: 4px; }
.sheets .add {
    margin-left: 28px;
    border: none;
}
.sheets .dots { margin-left: auto; }
.hscroll {
    width: 38%;
    display: flex;
    align-items: center;
    padding: 0 10px 0 4px;
    margin: 0 16px 0 6px;
}
.left, .right {
    border: 5px solid transparent;
    border-left: none;
    border-right: 8px solid #777;
}
.right {
    margin-left: auto;
    border-left: 8px solid #777;
    border-right: none;
}
.hscroll .thumb {
    width: 349px;
    height: 9px;
    margin-left: 93px;
}

/* status bar */
.status {
    display: flex;
    align-items: center;
    height: 23px;
    padding: 0 8px 0 11px;
    font-size: 11px;
    background-color: #f5f5f5;
}
.view {
    width: 40px;
    height: 23px;
}
.status span:first-child { margin-right: auto; }
.zoom {
    display: flex;
    align-items: center;
    gap: 4px;
    margin-left: 7px;
    font-size: 14px;
}
.zoom input {
    appearance: none;
    width: 100px;
    height: 1px;
    background-color: #666;
}
.zoom input::-webkit-slider-thumb {
    appearance: none;
    width: 5px;
    height: 11px;
    background-color: #666;
}
.percent { margin-left: 13px; }

/* taskbar */
.taskbar {
    display: flex;
    height: 40px;
    background-color: #1c1c1c;
    color: white;
}
.start { width: 48px; }
.find {
    width: 288px;
    margin-right: 1px;
    display: flex;
    align-items: center;
    gap: 10px;
    padding-left: 12px;
    font-size: 14px;
    color: #333;
    background-color: #f1f1f1;
    border: 1px solid #ccc;
}
.app {
    width: 49px;
    border: solid transparent;
    border-width: 3px 0 0;
}
.app.open {
    background: linear-gradient(#76b9ed, #76b9ed) no-repeat center bottom / 40px 3px;
}
.app.focus {
    background: linear-gradient(#76b9ed, #76b9ed) no-repeat center bottom / 48px 3px, #4a4a4a;
    border-color: #4a4a4a;
}
.app.grey {
    color: #6b7d88;
    background-color: transparent;
}
.app.red { color: #d5183f; }
.app.blue {
    color: #1a5fd8;
    background-color: transparent;
}
.tray {
    margin-left: auto;
    display: flex;
    align-items: center;
    gap: 8px;
    padding-right: 4px;
}
.clock {
    display: flex;
    flex-direction: column;
    align-items: center;
    line-height: 18px;
}
.notes {
    width: 45px;
    height: 100%;
    padding: 12px 0 0 8px;
    position: relative;
    border-right: 1px solid #666;
}
.notes span {
    position: absolute;
    left: 13px;
    top: 18px;
    width: 19px;
    height: 17px;
    line-height: 16px;
    border-radius: 9px;
    border: 1px solid #888;
    background-color: #333;
    font-size: 11px;
    text-align: center;
}
```
